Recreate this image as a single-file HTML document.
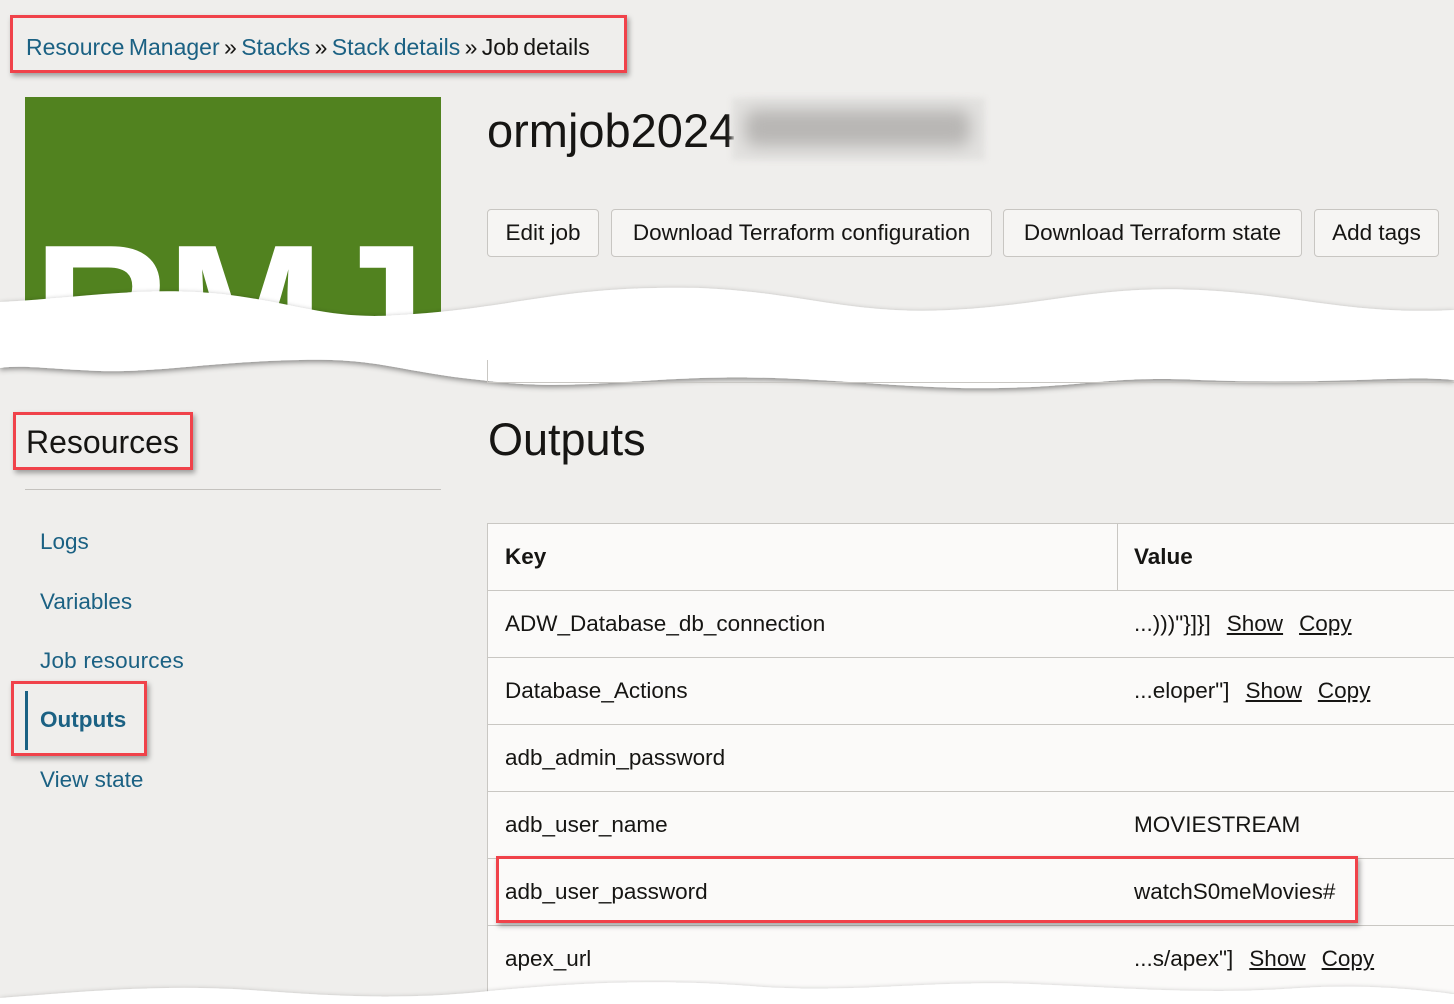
<!DOCTYPE html>
<html><head><meta charset="utf-8"><style>
*{margin:0;padding:0;box-sizing:border-box}
body{width:1454px;height:1004px;overflow:hidden;background:#efeeec;font-family:"Liberation Sans",Arial,sans-serif;position:relative;color:#161513}
.a{position:absolute;white-space:nowrap}
.lnk{color:#1b6183}
.red{position:absolute;border:3px solid #f0424a;box-shadow:2px 3px 5px rgba(0,0,0,.35)}
.btn{position:absolute;top:209px;height:48px;border:1px solid #c8c6c2;border-radius:4px;background:#f6f5f3;font-size:22.5px;line-height:46px;text-align:center}
.row{position:absolute;left:487px;width:967px;height:67px;border-top:1px solid #c9c7c3;font-size:22.5px;line-height:66px}
.row .k{position:absolute;left:18px}
.row .v{position:absolute;left:647px}
u{margin-left:16px}
</style></head><body>
<div class="a" style="left:26px;top:34px;font-size:23px;word-spacing:-2px"><span class="lnk">Resource Manager</span> » <span class="lnk">Stacks</span> » <span class="lnk">Stack details</span> » Job details</div>
<div class="red" style="left:10px;top:15px;width:617px;height:58px"></div>

<div class="a" style="left:25px;top:97px;width:416px;height:220px;background:#51821f;overflow:hidden">
<div class="a" style="left:8px;top:120px;font-size:190px;font-weight:bold;color:#fff;line-height:1;letter-spacing:-4px">RMJ</div></div>

<div class="a" style="left:487px;top:103px;font-size:47px">ormjob2024</div>
<div class="a" style="left:732px;top:98px;width:253px;height:62px;background:#e3e2e0;filter:blur(3px)"></div>
<div class="a" style="left:745px;top:110px;width:225px;height:36px;background:#b8b6b4;filter:blur(8px);border-radius:10px"></div>

<div class="btn" style="left:487px;width:112px">Edit job</div>
<div class="btn" style="left:611px;width:381px">Download Terraform configuration</div>
<div class="btn" style="left:1003px;width:299px">Download Terraform state</div>
<div class="btn" style="left:1314px;width:125px">Add tags</div>

<svg class="a" style="left:0;top:280px" width="1454" height="120" viewBox="0 0 1454 120">
<defs><filter id="s"><feDropShadow dx="0" dy="2" stdDeviation="3" flood-color="#000" flood-opacity=".45"/></filter></defs>
<path d="M0 22 C80 18 150 5 230 15 C300 24 330 40 400 35 C520 28 560 5 700 8 C800 12 850 35 950 30 C1050 25 1100 5 1200 10 C1300 15 1350 35 1454 30 L1454 100 C1400 95 1330 105 1200 100 C1100 95 1080 110 960 108 C860 105 800 95 700 98 C600 102 560 110 480 100 C400 92 380 78 300 80 C200 82 150 95 80 90 C40 88 20 85 0 88 Z" fill="#fff" filter="url(#s)"/>
</svg>
<div class="a" style="left:487px;top:360px;width:1px;height:23px;background:#c9c7c3"></div>
<div class="a" style="left:487px;top:382px;width:967px;height:1px;background:#c9c7c3"></div>

<div class="a" style="left:26px;top:424px;font-size:32px">Resources</div>
<div class="red" style="left:13px;top:412px;width:180px;height:58px"></div>
<div class="a" style="left:25px;top:489px;width:416px;height:1px;background:#c4c2be"></div>
<div class="a lnk" style="left:40px;top:529px;font-size:22.5px">Logs</div>
<div class="a lnk" style="left:40px;top:589px;font-size:22.5px">Variables</div>
<div class="a lnk" style="left:40px;top:648px;font-size:22.5px;letter-spacing:0.2px">Job resources</div>
<div class="a" style="left:25px;top:691px;width:3px;height:59px;background:#1b6183"></div>
<div class="a lnk" style="left:40px;top:707px;font-size:22.5px;font-weight:bold">Outputs</div>
<div class="red" style="left:11px;top:681px;width:136px;height:75px"></div>
<div class="a lnk" style="left:40px;top:767px;font-size:22.5px">View state</div>

<div class="a" style="left:488px;top:414px;font-size:45px">Outputs</div>

<div class="a" style="left:487px;top:523px;width:967px;height:470px;background:#fbfaf9;border-left:1px solid #c9c7c3"></div>
<div class="row" style="top:523px;font-weight:bold"><span class="k">Key</span><span class="v">Value</span></div>
<div class="a" style="left:1117px;top:523px;width:1px;height:67px;background:#c9c7c3"></div>
<div class="row" style="top:590px"><span class="k">ADW_Database_db_connection</span><span class="v">...)))"}]}]<u>Show</u><u>Copy</u></span></div>
<div class="row" style="top:657px"><span class="k">Database_Actions</span><span class="v">...eloper"]<u>Show</u><u>Copy</u></span></div>
<div class="row" style="top:724px"><span class="k">adb_admin_password</span></div>
<div class="row" style="top:791px"><span class="k">adb_user_name</span><span class="v">MOVIESTREAM</span></div>
<div class="row" style="top:858px"><span class="k">adb_user_password</span><span class="v">watchS0meMovies#</span></div>
<div class="row" style="top:925px"><span class="k">apex_url</span><span class="v">...s/apex"]<u>Show</u><u>Copy</u></span></div>
<div class="red" style="left:496px;top:856px;width:862px;height:67px"></div>

<svg class="a" style="left:0;top:970px" width="1454" height="34" viewBox="0 0 1454 34">
<path d="M0 28 C80 22 160 14 250 20 C330 26 400 30 480 22 C560 14 650 8 750 16 C850 24 930 10 1030 14 C1130 18 1200 25 1300 18 C1370 14 1420 20 1454 24 L1454 34 L0 34 Z" fill="#fff" filter="url(#s)"/>
</svg>
</body></html>
